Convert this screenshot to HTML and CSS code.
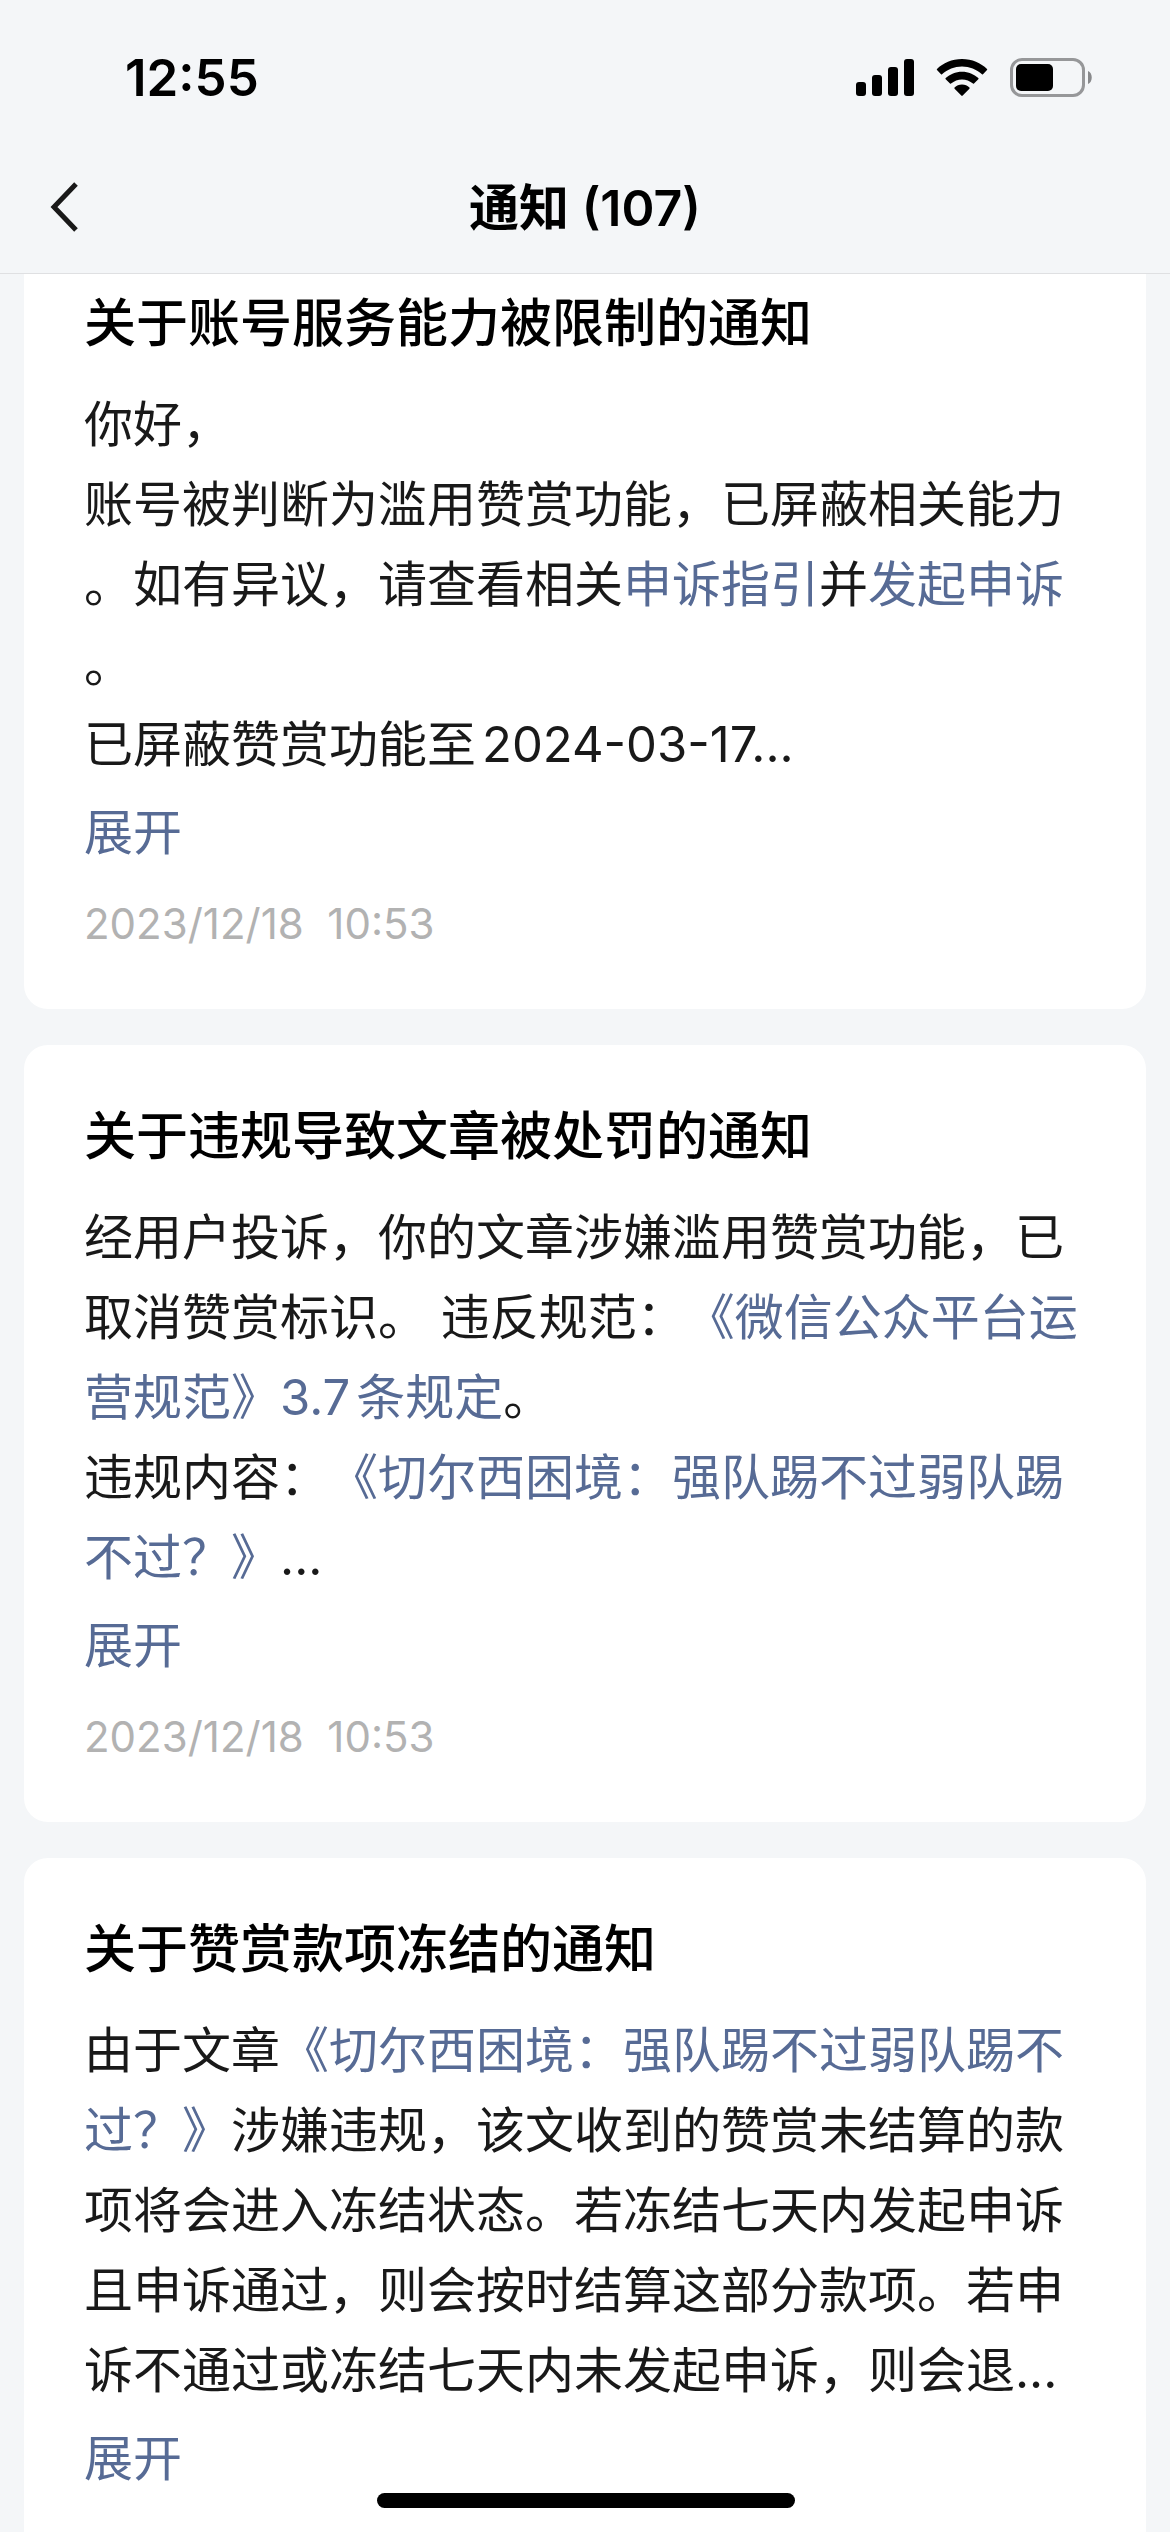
FILE: index.html
```html
<!DOCTYPE html>
<html lang="zh-CN">
<head>
<meta charset="utf-8">
<meta name="viewport" content="width=device-width, initial-scale=1">
<title>通知 (107)</title>
<link rel="stylesheet" href="styles.css">
</head>
<body>
<div class="app">
  <header class="top">
    <div class="status">
      <time class="clock">12:55</time>
      <div class="indicators">
        <svg width="58" height="38" viewBox="0 0 58 38" aria-hidden="true">
          <rect x="0" y="23" width="10" height="14" rx="3"/>
          <rect x="16" y="16" width="10" height="21" rx="3"/>
          <rect x="32" y="8" width="10" height="29" rx="3"/>
          <rect x="48" y="0" width="10" height="37" rx="3"/>
        </svg>
        <svg width="52" height="38" viewBox="0 0 52 38" aria-hidden="true">
          <path d="M26 0C36 0 45 4 51 10Q51.500 10.500 51 11L47 15.300Q46.500 15.800 46 15.300C40.500 10.500 33.500 7.600 26 7.600S11.500 10.500 6 15.300Q5.500 15.800 5 15.300L1 11Q.500 10.500 1 10C7 4 16 0 26 0Z"/>
          <path d="M26 12.700C32.500 12.700 38 15.200 42.300 19Q42.900 19.600 42.300 20.200L38 24.500Q37.500 25 37 24.500C34 22 30 20.400 26 20.400S18 22 15 24.500Q14.500 25 14 24.500L9.700 20.200Q9.100 19.600 9.700 19C14 15.200 19.500 12.700 26 12.700Z"/>
          <path d="M26 25.600C29 25.600 31.500 26.700 33.400 28.500Q34 29.100 33.400 29.700L26.700 36.600Q26 37.200 25.300 36.600L18.600 29.700Q18 29.100 18.600 28.500C20.500 26.700 23 25.600 26 25.600Z"/>
        </svg>
        <svg width="83" height="39" viewBox="0 0 83 39" aria-hidden="true">
          <rect class="battery-shell" x="1.500" y="1.500" width="72" height="36" rx="10.500"/>
          <rect x="6" y="6" width="37" height="27" rx="5"/>
          <path class="battery-tip" d="M78 13C83 15 83 24 78 26Z"/>
        </svg>
      </div>
    </div>
    <nav class="bar">
      <button class="back" type="button" aria-label="返回">
        <svg width="32" height="52" viewBox="0 0 32 52" aria-hidden="true"><path d="M28 3L6 26L28 49"/></svg>
      </button>
      <h1 class="bar-title">通知 (107)</h1>
    </nav>
  </header>

  <main class="list">
    <article class="card">
      <h2 class="title">关于账号服务能力被限制的通知</h2>
      <p class="text">你好，<br>账号被判断为滥用赞赏功能，已屏蔽相关能力。如有异议，请查看相关<a href="#guide">申诉指引</a>并<a href="#appeal">发起申诉</a>。<br>已屏蔽赞赏功能至<span class="spaced">2024-03-17...</span></p>
      <button class="more" type="button">展开</button>
      <time class="date">2023/12/18&nbsp; 10:53</time>
    </article>
    <article class="card">
      <h2 class="title">关于违规导致文章被处罚的通知</h2>
      <p class="text">经用户投诉，你的文章涉嫌滥用赞赏功能，已取消赞赏标识。 违反规范：<a href="#rules">《微信公众平台运营规范》3.7<span class="spaced">条规定</span></a>。<br>违规内容：<a href="#article">《切尔西困境：强队踢不过弱队踢不过？》</a>...</p>
      <button class="more" type="button">展开</button>
      <time class="date">2023/12/18&nbsp; 10:53</time>
    </article>
    <article class="card">
      <h2 class="title">关于赞赏款项冻结的通知</h2>
      <p class="text">由于文章<a href="#article">《切尔西困境：强队踢不过弱队踢不过？》</a>涉嫌违规，该文收到的赞赏未结算的款项将会进入冻结状态。若冻结七天内发起申诉且申诉通过，则会按时结算这部分款项。若申诉不通过或冻结七天内未发起申诉，则会退...</p>
      <button class="more" type="button">展开</button>
      <time class="date">2023/12/18&nbsp; 10:53</time>
    </article>
  </main>
  <div class="home"></div>
</div>
</body>
</html>
```

FILE: styles.css
```css
* { box-sizing: border-box; }

body {
  margin: 0;
  background: #f4f6f8;
  color: #191919;
  font-family: Inter, "Noto Sans CJK SC", sans-serif;
}

h1, h2, p { margin: 0; }

button {
  padding: 0;
  border: 0;
  background: none;
  font: inherit;
  text-align: left;
}

svg { display: block; }

.app {
  display: flex;
  flex-direction: column;
  height: 100vh;
  overflow: hidden;
}

.top {
  flex: none;
  position: relative;
  z-index: 1;
  background: #f4f6f8;
  border-bottom: 1px solid #dfe0e2;
  color: #000;
}

.status {
  display: flex;
  align-items: center;
  justify-content: space-between;
  height: 141px;
  padding: 14px 77px 0 125px;
}

.clock {
  font-size: 51px;
  font-weight: 600;
  line-height: 60px;
}

.indicators {
  display: flex;
  align-items: center;
  gap: 22px;
}

.battery-shell {
  fill: none;
  stroke: #969799;
  stroke-width: 3;
}

.battery-tip { fill: #88898b; }

.bar {
  display: grid;
  grid-template-columns: 1fr auto 1fr;
  align-items: center;
  height: 132px;
  padding: 0 48px;
}

.back svg {
  fill: none;
  stroke: #191919;
  stroke-width: 5;
}

.bar-title {
  padding-top: 2px;
  font-size: 50px;
  font-weight: 600;
  line-height: 72px;
}

.list {
  flex: 1;
  display: flex;
  flex-direction: column;
  gap: 36px;
  min-height: 0;
  margin-top: -42px;
  padding: 0 24px;
}

.card {
  flex: none;
  display: flex;
  flex-direction: column;
  align-items: flex-start;
  padding: 56px 60px 54px;
  border-radius: 24px;
  background: #fff;
}

.title {
  color: #000;
  font-size: 52px;
  font-weight: 500;
  line-height: 72px;
}

.text {
  margin: 25px 0 8px;
  font-size: 49px;
  line-height: 80px;
  line-break: anywhere;
  text-spacing-trim: space-all;
}

.text a {
  color: #576b95;
  text-decoration: none;
}

.spaced { margin-left: 6px; }

.more {
  color: #576b95;
  font-size: 49px;
  line-height: 80px;
}

.date {
  margin-top: 20px;
  color: #b2b2b2;
  font-size: 42px;
  line-height: 62px;
}

.home {
  position: fixed;
  bottom: 24px;
  left: 50%;
  width: 418px;
  height: 15px;
  margin-left: -208px;
  border-radius: 8px;
  background: #000;
}
```
